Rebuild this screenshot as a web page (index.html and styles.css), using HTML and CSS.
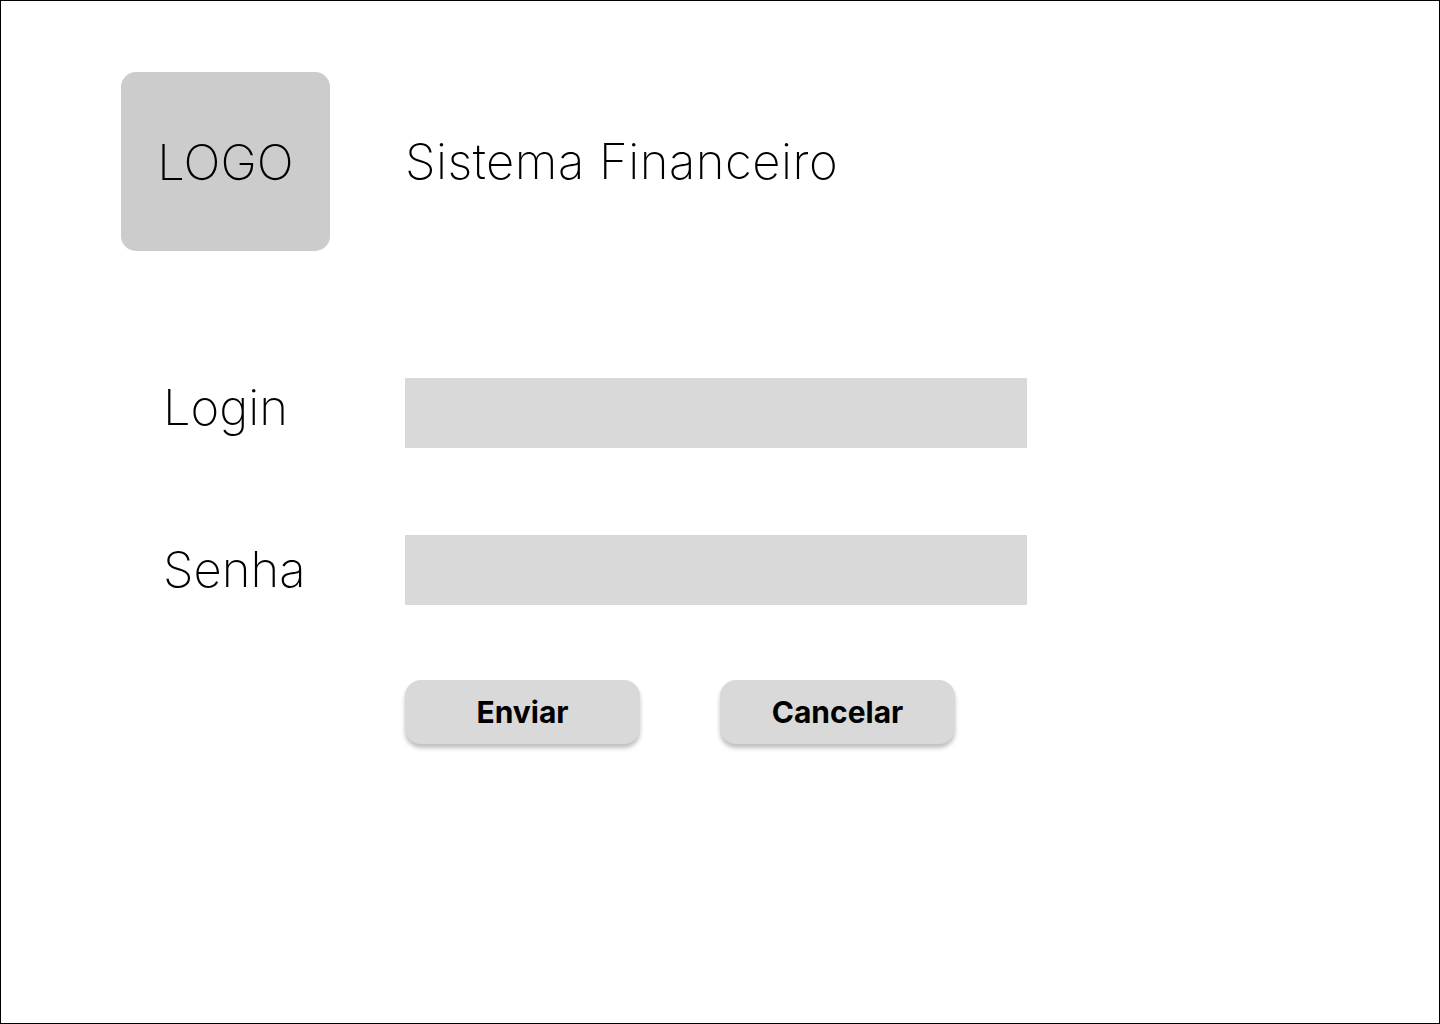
FILE: index.html
```html
<!DOCTYPE html>
<html lang="pt-BR">
<head>
<meta charset="utf-8">
<title>Sistema Financeiro</title>
<link rel="stylesheet" href="styles.css">
</head>
<body>
<div class="page">
  <header class="header">
    <div class="logo">LOGO</div>
    <h1 class="title">Sistema Financeiro</h1>
  </header>
  <form class="form">
    <label class="label label-login" for="login">Login</label>
    <input class="field" id="login" type="text">
    <label class="label" for="senha">Senha</label>
    <input class="field" id="senha" type="password">
    <div class="actions">
      <button class="btn" type="button">Enviar</button>
      <button class="btn" type="button">Cancelar</button>
    </div>
  </form>
</div>
</body>
</html>
```
FILE: styles.css
```css
* { box-sizing: border-box; }
html, body { margin: 0; padding: 0; background: #fff; }
body { font-family: Inter, "Noto Sans", sans-serif; color: #000; }

.page {
  width: 1440px;
  height: 1024px;
  border: 1px solid #000;
  padding: 71px 0 0 120px;
}

.header {
  display: flex;
  align-items: center;
  gap: 75px;
}

.logo {
  width: 209px;
  height: 179px;
  background: #cccccc;
  border-radius: 15px;
  display: flex;
  align-items: center;
  justify-content: center;
  font-size: 49px;
  font-weight: 200;
  padding-top: 2px;
}

.title {
  margin: 0;
  font-size: 49px;
  font-weight: 200;
  line-height: 58px;
  letter-spacing: 0.5px;
}

.form {
  margin-top: 127px;
  margin-left: 42px;
  display: grid;
  grid-template-columns: 242px 622px;
  row-gap: 87px;
  align-items: center;
}

.label {
  font-size: 49px;
  font-weight: 200;
  line-height: 58px;
}

.label-login { margin-bottom: 10px; }

.field {
  width: 622px;
  height: 70px;
  border: 0;
  background: #d9d9d9;
  margin: 0;
  padding: 0 16px;
  font-size: 24px;
  outline: none;
}

.actions {
  grid-column: 2;
  display: flex;
  gap: 80px;
  margin-top: -12px;
}

.btn {
  width: 235px;
  height: 64px;
  border: 0;
  border-radius: 16px;
  background: #d9d9d9;
  box-shadow: 0 4px 4px rgba(0, 0, 0, 0.25);
  font-family: Inter, "Liberation Sans", sans-serif;
  font-weight: 700;
  font-size: 30px;
  color: #000;
  padding: 0;
  cursor: pointer;
}
```
